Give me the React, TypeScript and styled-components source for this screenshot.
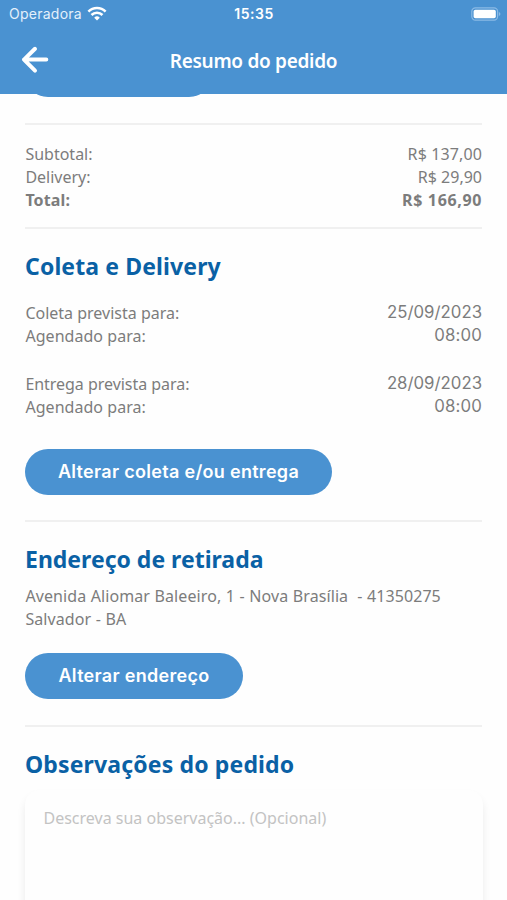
import React from "react";
import styled, { createGlobalStyle } from "styled-components";

const BLUE = "#4a92d1";
const SANS = '"Noto Sans", "Open Sans", sans-serif';
const SYSTEM = 'Inter, "Liberation Sans", sans-serif';

const GlobalStyle = createGlobalStyle`
  * { box-sizing: border-box; }
  html, body { margin: 0; background: #fefefe; overflow: hidden; }
`;

const Screen = styled.main`
  display: flex;
  flex-direction: column;
  width: 507px;
  height: 900px;
  overflow: hidden;
  background: #fefefe;
  color: #7c7c7c;
  font-family: ${SANS};
`;

const Header = styled.header`
  flex: none;
  height: 93.6px;
  background: ${BLUE};
  color: #fff;
`;

const StatusBar = styled.div`
  display: grid;
  grid-template-columns: 1fr auto 1fr;
  align-items: center;
  height: 27px;
  padding: 0 6px 0 9px;
  font-family: ${SYSTEM};
  font-size: 14px;
`;

const Carrier = styled.span`
  display: flex;
  align-items: center;
  gap: 5px;
  color: #e4f0fb;
  letter-spacing: 0.25px;
`;

const Clock = styled.span`
  margin-right: 2px;
  font-weight: 600;
  letter-spacing: 0.55px;
`;

const BatteryIcon = styled.svg`
  justify-self: end;
`;

const NavBar = styled.nav`
  display: grid;
  grid-template-columns: 1fr auto 1fr;
  align-items: center;
  height: 66px;
  padding: 0 20px;
`;

const BackButton = styled.button`
  display: flex;
  width: 30px;
  height: 30px;
  padding: 0;
  border: 0;
  background: none;
`;

const Title = styled.h1`
  margin: 1px 0 0;
  font-size: 19px;
  line-height: 26px;
  font-weight: 600;
  letter-spacing: -0.3px;
`;

const Content = styled.div`
  flex: 1;
  min-height: 0;
  overflow: hidden;
  padding: 0 25px;
`;

const Pill = styled.button<{ $width: number; $gap?: number }>`
  display: block;
  width: ${(p) => p.$width}px;
  height: 46px;
  margin: ${(p) => p.$gap ?? 0}px 0 0;
  padding: 0;
  border: 0;
  border-radius: 23px;
  background: ${BLUE};
  color: #fff;
  font: 600 18px/46px ${SYSTEM};
  letter-spacing: 0.3px;
  white-space: nowrap;
`;

const Divider = styled.hr<{ $gap: number }>`
  height: 2px;
  margin: ${(p) => p.$gap}px 0 0;
  border: 0;
  background: #f0f0f0;
`;

const Heading = styled.h2<{ $gap: number; $track?: number }>`
  margin: ${(p) => p.$gap}px 0 0;
  color: #0a61a5;
  font-size: 23px;
  line-height: 32px;
  font-weight: 700;
  letter-spacing: ${(p) => p.$track ?? 0}px;
`;

const Rows = styled.dl<{ $gap: number }>`
  margin: ${(p) => p.$gap}px 0 0;
`;

const Row = styled.div<{ $strong?: boolean }>`
  display: flex;
  justify-content: space-between;
  height: 23.3px;
  padding-left: 0.4px;
  font-size: 16px;
  line-height: 23.3px;
  font-weight: ${(p) => (p.$strong ? 700 : 400)};
  white-space: nowrap;
`;

const Label = styled.dt<{ $track?: number }>`
  letter-spacing: ${(p) => p.$track ?? 0}px;
`;

const Value = styled.dd<{ $track?: number }>`
  margin: 0;
  letter-spacing: ${(p) => p.$track ?? 0}px;
`;

const Schedule = styled(Value)`
  font-family: ${SYSTEM};
  font-size: 16.8px;
  line-height: 21.3px;
`;

const Address = styled.address<{ $gap: number }>`
  margin: ${(p) => p.$gap}px 0 0;
  padding-left: 0.4px;
  font-size: 16px;
  line-height: 23.2px;
  font-style: normal;
  letter-spacing: 0.09px;
  word-spacing: 0.25px;
  white-space: pre;
`;

const Notes = styled.textarea`
  display: block;
  width: 458px;
  height: 150px;
  margin: 10px 0 0;
  padding: 17px 18.5px;
  border: 0;
  border-radius: 15px;
  outline: 0;
  resize: none;
  background: #fefefe;
  box-shadow: 0 6px 8px rgba(0, 0, 0, 0.08);
  font: 16px/23px ${SANS};
  &::placeholder { color: #c3c3c3; opacity: 1; }
`;

export default function App() {
  return (
    <>
      <GlobalStyle />
      <Screen>
        <Header>
          <StatusBar>
            <Carrier>
              Operadora
              <svg width="20" height="15" viewBox="0 0 20 15" fill="none" stroke="#fff" strokeWidth="2.6">
                <path d="M1.4 5.6a12.2 12.2 0 0 1 17.2 0" />
                <path d="M4.5 9a7.8 7.8 0 0 1 11 0" />
                <path d="M7.2 11.7a4 4 0 0 1 5.6 0L10 14.5z" fill="#fff" stroke="none" />
              </svg>
            </Carrier>
            <Clock>15:35</Clock>
            <BatteryIcon width="30" height="14" viewBox="0 0 30 14">
              <rect x="0.8" y="0.8" width="25.8" height="12.4" rx="3.6" fill="none" stroke="#8bbae5" strokeWidth="1.2" />
              <rect x="2.6" y="2.7" width="22.2" height="8.6" rx="1.8" fill="#fff" />
              <path d="M27.9 5c2 .7 2 3.3 0 4z" fill="#8bbae5" />
            </BatteryIcon>
          </StatusBar>
          <NavBar>
            <BackButton aria-label="Voltar">
              <svg width="30" height="30" viewBox="0 0 30 30" fill="none" stroke="#fff" strokeWidth="4" strokeLinecap="round" strokeLinejoin="round">
                <path d="M26.3 14.6H4M15 3.8L4 14.6l11 11" />
              </svg>
            </BackButton>
            <Title>Resumo do pedido</Title>
          </NavBar>
        </Header>
        <Content>
          <Pill $width={187} $gap={-42.4} aria-hidden="true" />
          <Divider $gap={25.5} />
          <Rows $gap={17.8}>
            <Row><Label>Subtotal:</Label><Value $track={0.12}>R$ 137,00</Value></Row>
            <Row><Label>Delivery:</Label><Value>R$ 29,90</Value></Row>
            <Row $strong><Label $track={0.12}>Total:</Label><Value $track={0.64}>R$ 166,90</Value></Row>
          </Rows>
          <Divider $gap={15} />
          <Heading $gap={20.4} $track={0.12}>Coleta e Delivery</Heading>
          <Rows $gap={19.8}>
            <Row><Label>Coleta prevista para:</Label><Schedule>25/09/2023</Schedule></Row>
            <Row><Label $track={0.05}>Agendado para:</Label><Schedule $track={0.15}>08:00</Schedule></Row>
          </Rows>
          <Rows $gap={24.4}>
            <Row><Label $track={-0.04}>Entrega prevista para:</Label><Schedule>28/09/2023</Schedule></Row>
            <Row><Label $track={0.05}>Agendado para:</Label><Schedule $track={0.15}>08:00</Schedule></Row>
          </Rows>
          <Pill $width={307} $gap={29.4}>Alterar coleta e/ou entrega</Pill>
          <Divider $gap={25.5} />
          <Heading $gap={20.8}>Endereço de retirada</Heading>
          <Address $gap={10.2}>{"Avenida Aliomar Baleeiro, 1 - Nova Brasília  - 41350275\nSalvador - BA"}</Address>
          <Pill $width={218} $gap={22}>Alterar endereço</Pill>
          <Divider $gap={25.6} />
          <Heading $gap={21.1} $track={0.15}>Observações do pedido</Heading>
          <Notes placeholder="Descreva sua observação... (Opcional)" />
        </Content>
      </Screen>
    </>
  );
}
